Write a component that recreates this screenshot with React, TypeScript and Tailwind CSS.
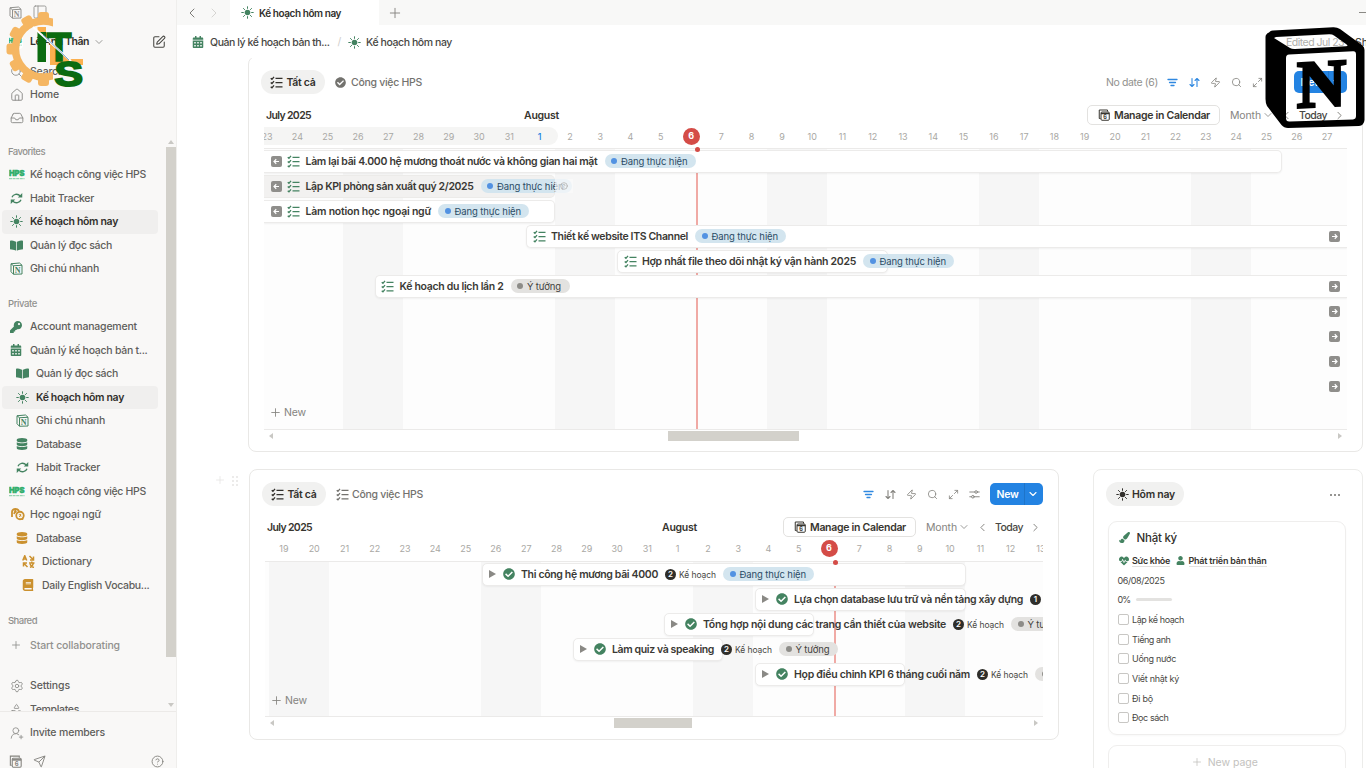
import { useLayoutEffect, useRef } from "react";
import type { ReactNode } from "react";
import {
  ChevronDown, ChevronLeft, ChevronRight, CircleHelp, House, Inbox, Maximize2,
  PanelLeft, Plus, Search, Send, Settings, SquarePen, UserRoundPlus, Zap, Shapes,
} from "lucide-react";
import { FaBook, FaBookOpen, FaCalendarAlt, FaCheckCircle, FaDatabase, FaHeartbeat, FaKey, FaPaintBrush, FaUser } from "react-icons/fa";

/** Single line of text whose tracking is adjusted so it spans `w` pixels. */
function T({ w, className = "", children }: { w: number; className?: string; children: string }) {
  const ref = useRef<HTMLSpanElement>(null);
  useLayoutEffect(() => {
    const el = ref.current!;
    el.style.letterSpacing = "0px";
    const r = document.createRange();
    r.selectNodeContents(el);
    const natural = r.getBoundingClientRect().width;
    el.style.letterSpacing = `${(w - natural) / children.length}px`;
  }, [w, children]);
  return (
    <span ref={ref} className={`block shrink-0 whitespace-nowrap pt-px ${className}`} style={{ width: w }}>
      {children}
    </span>
  );
}

const GREEN = "text-[#448361]";
const GOLD = "text-[#cb912f]";

function SunIcon({ className = "" }: { className?: string }) {
  return (
    <svg width="13" height="13" viewBox="0 0 26 26" className={`shrink-0 ${className}`} stroke="currentColor" strokeWidth="2" strokeLinecap="round">
      <circle cx="13" cy="13" r="5.6" fill="currentColor" stroke="none" />
      <path d="M13 1.5v3.3M13 21.2v3.3M1.5 13h3.3M21.2 13h3.3M4.9 4.9l2.3 2.3M18.8 18.8l2.3 2.3M4.9 21.1l2.3-2.3M18.8 7.2l2.3-2.3" />
    </svg>
  );
}

function Checklist({ className = "" }: { className?: string }) {
  return (
    <svg width="13" height="13" viewBox="0 0 26 26" className={`shrink-0 ${className}`} fill="none" stroke="currentColor" strokeWidth="2.700">
      <path d="M1.500 4.500l2.400 2.200L8 1.800M1.500 13l2.400 2.200L8 10.300M1.500 21.500l2.400 2.200L8 18.800M11 4.800h14M11 13.300h14M11 21.800h14" />
    </svg>
  );
}

function Cycle({ className = "" }: { className?: string }) {
  return (
    <svg width="13" height="13" viewBox="0 0 26 26" className={className} fill="none" stroke="currentColor" strokeWidth="2.6">
      <path d="M4 10.5C6 4.5 15 2 20.5 8M22 15.5C20 21.5 11 24 5.500 18" />
      <path d="M24.500 2v9h-9zM1.500 24v-9h9z" fill="currentColor" stroke="none" />
    </svg>
  );
}

function NotionMini({ className = "" }: { className?: string }) {
  return (
    <svg width="13" height="13" viewBox="0 0 26 26" className={className} fill="none" stroke="currentColor" strokeWidth="2">
      <path d="M2 3.500L19 2l5 4.500V24L7 24.500 2 19.500zM2 3.500L7 7.500 24 6.500M7 7.500v17" />
      <text x="15.500" y="21.500" textAnchor="middle" fontFamily="Liberation Serif, serif" fontWeight="700" fontSize="16" fill="currentColor" stroke="none">N</text>
    </svg>
  );
}

function HpsIcon() {
  return (
    <svg width="17" height="12" viewBox="0 0 17 12" className="-ml-px -mt-px text-[#2fae6b]">
      <text x="0" y="8" textLength="15.500" lengthAdjust="spacingAndGlyphs" fontFamily="Inter, sans-serif" fontWeight="900" fontSize="7.600" fill="currentColor" stroke="currentColor" strokeWidth="0.500">HPS</text>
      <path d="M0 10.700h15.500" stroke="currentColor" strokeWidth="1" strokeDasharray="3 .6" opacity=".6" />
    </svg>
  );
}

function ChatsIcon() {
  return (
    <svg width="15" height="13" viewBox="0 0 30 26" className="text-[#cb912f]" fill="none" stroke="currentColor" strokeWidth="3.600">
      <path d="M4 15V8c0-4 3-6 7-6s6 2 7 4M4 18v-5M8 12l2.500-6 2 3" />
      <circle cx="20" cy="15" r="7.500" />
      <path d="M26 18v5h-6M17.500 13.500h5M20 11.500l2 6M22 14l-4 4" strokeWidth="1.800" />
    </svg>
  );
}

function TranslateIcon() {
  return (
    <svg width="13" height="13" viewBox="0 0 26 26" className="text-[#cb912f]" fill="none" stroke="currentColor" strokeWidth="3">
      <path d="M1.500 11L5.500 1.500 9.500 11M3 8h5M15 2l7 7M23 3v7h-7M11 24l-7-7M3 23v-7h7M14 16h11M19.500 13v3M16 25c4-2 6-5 7-9M16 18c1 3 4 6 8 7" />
    </svg>
  );
}

function CalendarSix({ size = 12, className = "" }: { size?: number; className?: string }) {
  return (
    <svg width={size} height={size} viewBox="0 0 24 24" className={`shrink-0 ${className}`} fill="none" stroke="currentColor" strokeWidth="2">
      <path d="M5 19H2.500V2H19v3" />
      <rect x="6" y="6" width="16.500" height="16.500" rx="2" />
      <path d="M6 9h16.500" strokeWidth="3" />
      <text x="14.300" y="20.500" textAnchor="middle" fontFamily="Inter, sans-serif" fontWeight="700" fontSize="11" fill="currentColor" stroke="none">6</text>
    </svg>
  );
}

function FilterLines({ className = "" }: { className?: string }) {
  return (
    <svg width="11" height="11" viewBox="0 0 22 22" className={className} stroke="currentColor" strokeWidth="2.600" strokeLinecap="round">
      <path d="M2 5h18M5 11h12M8 17h6" />
    </svg>
  );
}

function SortArrows({ className = "" }: { className?: string }) {
  return (
    <svg width="11" height="11" viewBox="0 0 22 22" className={className} fill="none" stroke="currentColor" strokeWidth="2.200" strokeLinecap="round" strokeLinejoin="round">
      <path d="M6 3v16M2 15l4 4 4-4M16 19V3M12 7l4-4 4 4" />
    </svg>
  );
}

type NavItem = { icon: ReactNode; label: string; w: number; level?: number; active?: boolean; dim?: boolean };

function NavRow({ icon, label, w, level = 0, active, dim }: NavItem) {
  const pad = ["pl-[6px]", "pl-[12px]", "pl-[18px]"][level];
  return (
    <div className={`mx-[2px] flex h-[23.5px] w-[156px] shrink-0 items-center rounded-[4px] ${pad} ${active ? "bg-[#f0efee]" : ""}`}>
      <span className="flex w-[22px] shrink-0 items-center pl-[1.500px]">{icon}</span>
      <T w={w} className={active ? "font-semibold text-[#32302c]" : dim ? "font-medium text-[#91918e]" : "font-medium text-[#5f5e5b]"}>{label}</T>
    </div>
  );
}

const favorites: NavItem[] = [
  { icon: <HpsIcon />, label: "Kế hoạch công việc HPS", w: 116 },
  { icon: <Cycle className={GREEN} />, label: "Habit Tracker", w: 64 },
  { icon: <SunIcon className={GREEN} />, label: "Kế hoạch hôm nay", w: 88, active: true },
  { icon: <FaBookOpen size={13} className={GREEN} />, label: "Quản lý đọc sách", w: 82 },
  { icon: <NotionMini className={GREEN} />, label: "Ghi chú nhanh", w: 69 },
];

const privates: NavItem[] = [
  { icon: <FaKey size={12} className={GREEN} />, label: "Account management", w: 107 },
  { icon: <FaCalendarAlt size={12} className={GREEN} />, label: "Quản lý kế hoạch bản t...", w: 117.5 },
  { icon: <FaBookOpen size={13} className={GREEN} />, label: "Quản lý đọc sách", w: 82, level: 1 },
  { icon: <SunIcon className={GREEN} />, label: "Kế hoạch hôm nay", w: 88, level: 1, active: true },
  { icon: <NotionMini className={GREEN} />, label: "Ghi chú nhanh", w: 69, level: 1 },
  { icon: <FaDatabase size={12} className={GREEN} />, label: "Database", w: 45, level: 1 },
  { icon: <Cycle className={GREEN} />, label: "Habit Tracker", w: 64, level: 1 },
  { icon: <HpsIcon />, label: "Kế hoạch công việc HPS", w: 116 },
  { icon: <ChatsIcon />, label: "Học ngoại ngữ", w: 71 },
  { icon: <FaDatabase size={12} className={GOLD} />, label: "Database", w: 45, level: 1 },
  { icon: <TranslateIcon />, label: "Dictionary", w: 50, level: 2 },
  { icon: <FaBook size={12} className={GOLD} />, label: "Daily English Vocabu...", w: 107.5, level: 2 },
];

function SectionTitle({ children, w, className }: { children: string; w: number; className: string }) {
  return (
    <div className={`flex h-[23.5px] shrink-0 items-center pl-[8px] text-[9.500px] font-medium text-[#91918e] ${className}`}>
      <T w={w}>{children}</T>
    </div>
  );
}

function Sidebar() {
  const line = "text-[#91918e]";
  return (
    <aside className="flex h-full w-[177px] shrink-0 flex-col border-r border-[#efeeec] bg-[#f9f8f7]">
      <div className="flex h-6 shrink-0 items-center gap-[10px] pl-[9px] text-[#91918e]">
        <NotionMini />
        <PanelLeft size={16} strokeWidth={1.3} />
      </div>
      <div className="flex h-[35.25px] shrink-0 items-center pl-[9px]">
        <span className="flex h-[14px] w-[14px] items-center overflow-hidden rounded bg-white"><HpsIcon /></span>
        <T w={59} className="ml-[7px] font-semibold text-[#32302c]">Lê Anh Thân</T>
        <ChevronDown size={12} strokeWidth={1.800} className="ml-[4px] text-[#91918e]" />
        <SquarePen size={14} strokeWidth={1.8} className="ml-[47px] text-[#484743]" />
      </div>
      <NavRow icon={<Search size={13} strokeWidth={1.7} className={line} />} label="Search" w={34} />
      <NavRow icon={<House size={14} strokeWidth={1.7} className={line} />} label="Home" w={29} />
      <NavRow icon={<Inbox size={14} strokeWidth={1.7} className={line} />} label="Inbox" w={27} />
      <div className="mt-[8px] flex h-[573px] shrink-0">
        <div className="flex w-[166px] flex-col overflow-hidden">
          <SectionTitle w={37} className="mt-[1.75px]">Favorites</SectionTitle>
          {favorites.map((n) => <NavRow key={n.label} {...n} />)}
          <SectionTitle w={29} className="mt-[11px]">Private</SectionTitle>
          {privates.map((n, i) => <NavRow key={i} {...n} />)}
          <SectionTitle w={29} className="mt-[11.25px]">Shared</SectionTitle>
          <div className="mt-[1.5px]">
            <NavRow icon={<Plus size={12} strokeWidth={1.7} className={line} />} label="Start collaborating" w={90} dim />
          </div>
          <div className="mt-[17px]">
            <NavRow icon={<Settings size={14} strokeWidth={1.6} className={line} />} label="Settings" w={40} />
          </div>
          <NavRow icon={<Shapes size={13} strokeWidth={1.6} className={line} />} label="Templates" w={49} />
        </div>
        <div className="flex w-[10px] flex-col items-center">
          <span className="mt-[2px] h-0 w-0 border-x-[3px] border-b-[4px] border-x-transparent border-b-[#c9c8c4]" />
          <span className="mt-[3px] h-[510px] w-[10px] bg-[#d3d1cb]" />
          <span className="mt-[46px] h-0 w-0 border-x-[3px] border-t-[4px] border-x-transparent border-t-[#c9c8c4]" />
        </div>
      </div>
      <div className="flex h-[57px] shrink-0 flex-col border-t border-[#eceae8] pt-[9px]">
        <NavRow icon={<UserRoundPlus size={14} strokeWidth={1.5} className={line} />} label="Invite members" w={75} />
        <div className="mt-[11px] flex items-center pl-[9px] text-[#85847f]">
          <CalendarSix size={13} />
          <Send size={13} strokeWidth={1.7} className="ml-[11px]" />
          <CircleHelp size={13} strokeWidth={1.7} className="ml-[105px]" />
        </div>
      </div>
    </aside>
  );
}

function TopBars() {
  return (
    <>
      <div className="flex h-[25px] shrink-0 bg-[#f8f8f7]">
        <div className="flex w-[53px] items-center pl-[8px]">
          <ChevronLeft size={16} strokeWidth={1.500} className="-ml-px text-[#7d7c78]" />
          <ChevronRight size={16} strokeWidth={1.500} className="ml-[6px] text-[#d6d5d2]" />
        </div>
        <div className="flex w-[149px] items-center bg-white pl-[10.5px]">
          <SunIcon className={GREEN} />
          <T w={82} className="ml-[5.5px] text-[10px] font-semibold text-[#32302c]">Kế hoạch hôm nay</T>
        </div>
        <div className="flex flex-1 items-center pl-[8px]">
          <Plus size={16} strokeWidth={1.400} className="text-[#85847f]" />
          <span className="ml-auto h-px w-[7px] bg-[#8a8985]" />
        </div>
      </div>
      <div className="flex h-[33px] shrink-0 items-center overflow-hidden pl-[15px] pt-px font-medium text-[#484743]">
        <FaCalendarAlt size={12} className={GREEN} />
        <T w={119.5} className="ml-[6px]">Quản lý kế hoạch bản th...</T>
        <span className="ml-[8px] w-[10px] font-normal text-[#cfcecb]">/</span>
        <SunIcon className={GREEN} />
        <T w={86} className="ml-[5.500px]">Kế hoạch hôm nay</T>
        <T w={58} className="ml-auto font-normal text-[#b0afab]">Edited Jul 23</T>
        <span className="ml-[11px] w-[11px] whitespace-nowrap pt-px">Share</span>
      </div>
    </>
  );
}

type Entry = {
  left: number; width: number; title?: string; w?: number; back?: boolean; forward?: boolean;
  hover?: boolean; tag?: "doing" | "idea"; rel?: number; relName?: boolean; task?: boolean;
};

function Tag({ kind, faded }: { kind: "doing" | "idea"; faded?: boolean }) {
  const doing = kind === "doing";
  return (
    <span className={`relative ml-[7px] flex h-[14px] shrink-0 items-center rounded-full pl-[6.500px] ${doing ? "w-[91px] bg-[#d3e5ef]" : "w-[59px] bg-[#e3e2e0]"}`}>
      <span className={`h-[6px] w-[6px] shrink-0 rounded-full ${doing ? "bg-[#5292e2]" : "bg-[#8d8c88]"}`} />
      <T w={doing ? 66.5 : 34} className={`ml-[4px] text-[9.500px] ${doing ? "text-[#2b4c66]" : "text-[#42413d]"}`}>{doing ? "Đang thực hiện" : "Ý tưởng"}</T>
      {faded && (
        <span className="absolute inset-y-0 -right-px flex w-[18px] items-center justify-center bg-[#fafafa]/65 text-[#a9a8a4]">
          <CircleHelp size={8} strokeWidth={2} />
        </span>
      )}
    </span>
  );
}

function ArrowBox({ flip }: { flip?: boolean }) {
  return (
    <svg width="11" height="11" viewBox="0 0 22 22" className="shrink-0">
      <rect width="22" height="22" rx="4" fill="#8f8e8b" />
      <path d={flip ? "M16 11H6M10.500 6.500L6 11l4.500 4.500" : "M6 11h10M11.500 6.500L16 11l-4.500 4.500"} fill="none" stroke="#fff" strokeWidth="2.400" />
    </svg>
  );
}

function EntryRow({ e }: { e: Entry }) {
  return (
    <div className="relative flex h-[25px] shrink-0 items-center">
      {e.title && (
        <div
          className={`flex h-[23px] shrink-0 items-center border ${e.back ? "rounded-r-[5px] border-l-0 pl-[7px]" : e.task ? "rounded-[5px] pl-[6px]" : "rounded-[5px] pl-[5.500px]"} ${e.forward ? "rounded-r-none border-r-0" : ""} ${e.hover ? "border-[#ecebe9] bg-[#f2f1f0]" : "border-[#ecebea] bg-white shadow-[0_1px_2px_rgba(0,0,0,0.05)]"}`}
          style={{ marginLeft: e.left, width: e.width }}
        >
          {e.back && <span className="mr-[5px] shrink-0"><ArrowBox flip /></span>}
          {e.task ? (
            <>
              <span className="h-0 w-0 shrink-0 border-y-[4px] border-l-[7px] border-y-transparent border-l-[#8a8985]" />
              <FaCheckCircle size={12} className={`ml-[7.500px] mr-[0.500px] shrink-0 ${GREEN}`} />
            </>
          ) : (
            <Checklist className={GREEN} />
          )}
          <T w={e.w!} className="ml-[5.500px] font-semibold text-[#3a3935]">{e.title}</T>
          {e.rel && (
            <span className="ml-[7px] flex h-[11px] w-[11px] shrink-0 items-center justify-center rounded-full bg-[#2f2e2a] text-[8px] font-semibold text-white">{e.rel}</span>
          )}
          {e.relName && <T w={37} className="ml-[3px] text-[8.500px] text-[#484743]">Kế hoạch</T>}
          {e.tag && <Tag kind={e.tag} faded={e.hover} />}
        </div>
      )}
      {e.forward && <span className="absolute right-[7.500px] top-[7.500px]"><ArrowBox /></span>}
    </div>
  );
}

function Controls({ sortOn }: { sortOn?: boolean }) {
  const slot = "flex w-[21.2px] justify-center";
  return (
    <div className="flex items-center text-[#85847f]">
      <span className={slot}><FilterLines className="text-[#2f88e0]" /></span>
      <span className={slot}><SortArrows className={sortOn ? "text-[#2f88e0]" : ""} /></span>
      <span className={slot}><Zap size={11} strokeWidth={1.800} /></span>
      <span className={slot}><Search size={11} strokeWidth={1.800} /></span>
      <span className={slot}><Maximize2 size={11} strokeWidth={1.800} /></span>
      <span className={slot}>
        <svg width="11" height="11" viewBox="0 0 22 22" fill="none" stroke="currentColor" strokeWidth="1.900" strokeLinecap="round">
          <path d="M1.500 6h10M17 6h3.500M1.500 15.500H5M10.500 15.500h10" />
          <circle cx="14.200" cy="6" r="2.600" />
          <circle cx="7.800" cy="15.500" r="2.600" />
        </svg>
      </span>
      <span className="ml-[4.500px] flex h-[21.500px] w-[53px] items-center rounded-[5px] bg-[#2383e2] text-white">
        <T w={22} className="ml-[6.500px] font-semibold">New</T>
        <span className="ml-[5px] flex h-full w-[18px] items-center justify-center border-l border-[#1e74c9]"><ChevronDown size={12} strokeWidth={2.200} /></span>
      </span>
    </div>
  );
}

type TimelineProps = {
  secondIcon: ReactNode; noDate?: boolean; monthGap: string; firstDay: number; count: number; shift: number;
  todayX: number; dark?: boolean; rows: Entry[]; chartClass: string; thumbClass: string;
};

function Timeline(p: TimelineProps) {
  const days = Array.from({ length: p.count }, (_, i) => p.firstDay + i);
  // 26 July 2025 is a Saturday
  const weekend = (d: number) => (((d - 26) % 7) + 7) % 7 < 2;
  return (
    <div className="flex flex-col">
      <div className="flex h-6 items-center">
        <div className="-ml-[3px] flex h-6 w-[64px] items-center rounded-full bg-[#f1f1f0] pl-[9px] text-[#32302c]">
          <Checklist />
          <T w={29} className="ml-[3.500px] font-semibold">Tất cả</T>
        </div>
        <span className="ml-[9.500px] text-[#73726e]">{p.secondIcon}</span>
        <T w={71} className={`${p.noDate ? "ml-[5.500px]" : "ml-[3.500px]"} font-medium text-[#73726e]`}>Công việc HPS</T>
        <div className="ml-auto flex items-center">
          {p.noDate && <T w={52} className="mr-[4.500px] text-[#91918e]">No date (6)</T>}
          <Controls sortOn={p.noDate} />
        </div>
      </div>
      <div className="mt-[11px] flex h-5 items-center text-[#37352f]">
        <T w={45} className="ml-[2px] font-semibold">July 2025</T>
        <T w={35} className={`font-semibold ${p.monthGap}`}>August</T>
        <div className="ml-auto flex h-5 w-[133px] items-center rounded-[5px] border border-[#e3e2e0] bg-white pl-[9.500px]">
          <CalendarSix />
          <T w={96} className="ml-[4.500px] font-semibold">Manage in Calendar</T>
        </div>
        <T w={31} className="ml-[10px] text-[#85847f]">Month</T>
        <ChevronDown size={12} strokeWidth={1.800} className="ml-[1px] text-[#91918e]" />
        <ChevronLeft size={13} strokeWidth={1.800} className="ml-[6px] text-[#85847f]" />
        <T w={28} className="ml-[6px] font-medium text-[#484743]">Today</T>
        <ChevronRight size={13} strokeWidth={1.800} className="ml-[6px] mr-px text-[#85847f]" />
      </div>
      <div className="mt-[2px] flex h-[18px] overflow-hidden">
        <div className={`flex w-[294px] shrink-0 ${p.dark ? "rounded-r-full bg-[#f5f5f4]" : ""}`}>
          {days.map((d, i) => {
            const n = d > 31 ? d - 31 : d;
            const today = d === 37;
            return (
              <span key={d} className="flex w-[30.290px] shrink-0 items-center justify-center pt-px text-[9px] text-[#a9a8a4]" style={{ marginLeft: i === 0 ? p.shift : 0 }}>
                <span className={today ? "-mt-px flex h-[17px] w-[17px] items-center justify-center rounded-full bg-[#d44c47] font-bold text-white" : p.dark && d === 32 ? "font-medium text-[#2383e2]" : ""}>{n}</span>
              </span>
            );
          })}
        </div>
      </div>
      <div className={`relative shadow-[inset_0_1px_0_#ebeae9,inset_0_-1px_0_#ebeae9] ${p.chartClass}`}>
        <div className="absolute inset-x-0 bottom-px top-px flex overflow-hidden bg-[#fdfdfd]">
          {days.map((d, i) => (
            <span key={d} className={`w-[30.290px] shrink-0 ${weekend(d) ? "bg-[#f6f6f6]" : ""}`} style={{ marginLeft: i === 0 ? p.shift : 0 }} />
          ))}
          <span className="absolute inset-y-0 w-[2px] bg-[#f0aaa5]" style={{ left: p.todayX }} />
        </div>
        <div className="relative flex h-full flex-col overflow-hidden pt-[0.500px]">
          {p.rows.map((e, i) => <EntryRow key={i} e={e} />)}
          <div className="mt-auto flex h-[31px] shrink-0 items-center pb-[4px] pl-[5px] text-[#85847f]">
            <Plus size={13} strokeWidth={1.600} />
            <T w={22} className="ml-[2px]">New</T>
          </div>
        </div>
        <span className="absolute -top-[1px] h-[5px] w-[5px] rounded-full bg-[#d44c47]" style={{ left: p.todayX - 1.5 }} />
      </div>
      <div className="flex h-[12px] items-center px-[5px]">
        <span className="h-0 w-0 border-y-[3px] border-r-[4px] border-y-transparent border-r-[#c9c8c4]" />
        <span className={`h-[9.500px] bg-[#d3d1cb] ${p.thumbClass}`} />
        <span className="ml-auto h-0 w-0 border-y-[3px] border-l-[4px] border-y-transparent border-l-[#c9c8c4]" />
      </div>
    </div>
  );
}

const mainRows: Entry[] = [
  { left: 0, width: 1018, back: true, title: "Làm lại bãi 4.000 hệ mương thoát nước và không gian hai mặt", w: 292, tag: "doing" },
  { left: 0, width: 291, back: true, hover: true, title: "Lập KPI phòng sản xuất quý 2/2025", w: 168, tag: "doing" },
  { left: 0, width: 290.5, back: true, title: "Làm notion học ngoại ngữ", w: 125.5, tag: "doing" },
  { left: 262, width: 821, forward: true, title: "Thiết kế website ITS Channel", w: 137, tag: "doing" },
  { left: 353, width: 271, title: "Hợp nhất file theo dõi nhật ký vận hành 2025", w: 214, tag: "doing" },
  { left: 110.5, width: 972.5, forward: true, title: "Kế hoạch du lịch lần 2", w: 104, tag: "idea" },
  { left: 0, width: 0, forward: true },
  { left: 0, width: 0, forward: true },
  { left: 0, width: 0, forward: true },
  { left: 0, width: 0, forward: true },
];

const taskRows: Entry[] = [
  { left: 216.5, width: 484, task: true, title: "Thi công hệ mương bãi 4000", w: 137, rel: 2, relName: true, tag: "doing" },
  { left: 489.5, width: 211, task: true, title: "Lựa chọn database lưu trữ và nền tảng xây dựng", w: 229, rel: 1 },
  { left: 398.5, width: 150.5, task: true, title: "Tổng hợp nội dung các trang cần thiết của website", w: 243, rel: 2, relName: true, tag: "idea" },
  { left: 307.5, width: 150.5, task: true, title: "Làm quiz và speaking", w: 102, rel: 2, relName: true, tag: "idea" },
  { left: 489.5, width: 150, task: true, title: "Họp điều chỉnh KPI 6 tháng cuối năm", w: 176, rel: 2, relName: true, tag: "idea" },
];

const checks: [string, number][] = [["Lập kế hoạch", 52], ["Tiếng anh", 38.5], ["Uống nước", 44], ["Viết nhật ký", 47], ["Đi bộ", 21], ["Đọc sách", 36.5]];

function TodayPanel() {
  return (
    <section className="ml-[34px] flex h-[320px] w-[270px] flex-col rounded-[8px] border-[1.500px] border-[#ececea] px-[15px] pt-[12px]">
      <div className="-ml-[3px] flex h-6 items-center justify-between pr-[7px]">
        <div className="flex h-6 w-[78px] items-center rounded-full bg-[#f1f1f0] pl-[9.500px] text-[#32302c]">
          <SunIcon />
          <T w={43} className="ml-[3.500px] font-semibold">Hôm nay</T>
        </div>
        <div className="mt-px flex gap-[2px]">
          {[0, 1, 2].map((i) => <span key={i} className="h-[2px] w-[2px] rounded-full bg-[#73726e]" />)}
        </div>
      </div>
      <div className="-ml-px mt-[15px] flex h-[214px] w-[238px] flex-col rounded-[9px] border border-[#efeeed] pl-[8.500px] pt-[5.500px] text-[9px] text-[#484743] shadow-[0_1px_2px_rgba(0,0,0,0.03)]">
        <div className="flex h-[20px] items-center">
          <FaPaintBrush size={11} className={`ml-px ${GREEN}`} />
          <T w={40.5} className="ml-[7px] text-[11.500px] font-medium text-[#32302c]">Nhật ký</T>
        </div>
        <div className="mt-[3px] flex h-[20px] items-center font-semibold text-[#37352f]">
          <FaHeartbeat size={10} className={`ml-px ${GREEN}`} />
          <T w={38} className="ml-[3.500px] border-b border-[#e3e2e0] leading-[11px]">Sức khỏe</T>
          <FaUser size={9} className={`ml-[5.500px] ${GREEN}`} />
          <T w={78} className="ml-[4px] border-b border-[#e3e2e0] leading-[11px]">Phát triển bản thân</T>
        </div>
        <div className="flex h-[19.600px] items-center"><T w={47}>06/08/2025</T></div>
        <div className="flex h-[19.600px] items-center">
          <T w={12.5}>0%</T>
          <span className="ml-[6px] h-[3px] w-[36px] rounded-full bg-[#e3e2e0]" />
        </div>
        {checks.map(([label, w]) => (
          <div key={label} className="flex h-[19.640px] shrink-0 items-center">
            <span className="h-[11px] w-[11px] rounded-[2px] border border-[#c8c7c4] bg-white" />
            <T w={w} className="ml-[3.500px]">{label}</T>
          </div>
        ))}
      </div>
      <div className="-ml-px mt-[10px] flex h-[40px] w-[238px] items-start justify-center rounded-[9px] border border-[#efeeed] pr-[5px] pt-[9px] text-[#c3c2be]">
        <Plus size={12} strokeWidth={1.600} className="mt-px" />
        <T w={50} className="ml-[4.500px]">New page</T>
      </div>
    </section>
  );
}

function GearLogo() {
  const teeth = [90, 120, 150, 180, 210, 240, 270];
  return (
    <svg width="84" height="84" viewBox="0 0 84 84" className="absolute left-[3px] top-[7px]">
      <defs><clipPath id="gear-half"><rect x="0" y="0" width="50" height="84" /></clipPath></defs>
      <g clipPath="url(#gear-half)">
        <circle cx="40.500" cy="42" r="28" fill="none" stroke="#f5b662" strokeWidth="7.500" />
        {teeth.map((a) => (
          <rect key={a} x="68" y="36.500" width="9.500" height="11" rx="3" fill="#f5b662" transform={`rotate(${a} 40.500 42)`} />
        ))}
      </g>
      <path d="M34.500 20h8.500v14l-8.500-8z" fill="#fbb04f" />
      <path d="M48 36l19 16h13v6H47V36z" fill="#fbb04f" />
      <rect x="34.500" y="25" width="8.500" height="30" fill="#0b6b10" />
      <text x="43.500" y="53.500" fontFamily="Liberation Sans, sans-serif" fontWeight="700" fontSize="41" textLength="25" lengthAdjust="spacingAndGlyphs" fill="#0b6b10" stroke="#0b6b10" strokeWidth="1.500">T</text>
      <path d="M30 20L68 54" stroke="#fff" strokeWidth="2" />
      <path d="M40 28L66 53" stroke="#7ba7d6" strokeWidth="1" />
      <text x="51.500" y="78.500" fontFamily="Liberation Sans, sans-serif" fontWeight="700" fontSize="35" textLength="28.500" lengthAdjust="spacingAndGlyphs" fill="#0b6b10" stroke="#0b6b10" strokeWidth="2">S</text>
    </svg>
  );
}

function CubeLogo() {
  return (
    <svg width="101" height="104" viewBox="-2 0 101 104" className="absolute right-0 top-[26px]">
      <path
        fillRule="evenodd"
        d="M3 6.500Q4.500 4.500 7 4.500L67 1.200Q71 1 74 3L96.500 19.500Q98.500 21 98.500 24V94Q98 99.500 93 100L22 102Q18 102 15.500 99L1 80Q-0.500 77 -0.500 73V11Q-0.500 8 3 6.500zM8 12L24 22Q26 23.200 29 23L80 20.200Q83 20 80 18L68 9.500Q66 8 63 8.200L10 11zM23 28.500Q20 28.500 20 32V92Q20 96 24 95.500L87 93.500Q90 93 90 90V28.500Q90 25 87 25.300z"
        transform="translate(-1 0)"
      />
      <text x="30" y="81" fontFamily="Liberation Serif, serif" fontWeight="700" fontSize="67" textLength="49" lengthAdjust="spacingAndGlyphs" stroke="#000" strokeWidth="3" transform="skewY(-3) translate(0 2)">N</text>
    </svg>
  );
}

export default function App() {
  return (
    <div className="relative flex h-[768px] w-[1366px] overflow-hidden bg-white text-[10.500px] leading-[14px] text-[#37352f]" style={{ fontFamily: "Inter, 'Noto Sans', sans-serif" }}>
      <Sidebar />
      <main className="flex min-w-0 flex-1 flex-col">
        <TopBars />
        <div className="flex min-h-0 flex-1 flex-col overflow-hidden">
          <section className="-mt-[2px] ml-[71px] h-[396px] w-[1115px] shrink-0 rounded-[8px] border-[1.500px] border-[#e9e8e6] px-[15px] pt-[13px]">
            <Timeline
              secondIcon={<FaCheckCircle size={11} />} noDate monthGap="ml-[213px]" firstDay={23} count={37} shift={-12}
              todayX={432} dark rows={mainRows} chartClass="mt-[3px] h-[282px]" thumbClass="ml-[395px] w-[131px]"
            />
          </section>
          <div className="mt-[17px] flex">
            <div className="flex w-[72px] items-start pl-[37px] pt-[5px] text-[#e4e3e1]">
              <Plus size={12} strokeWidth={1.500} />
              <span className="ml-[6px] mt-[2px] grid grid-cols-2 gap-[2px]">
                {[0, 1, 2, 3, 4, 5].map((i) => <span key={i} className="h-[2px] w-[2px] bg-[#ecebea]" />)}
              </span>
            </div>
            <section className="h-[271px] w-[810px] rounded-[8px] border-[1.500px] border-[#e9e8e6] px-[15px] pt-[12px]">
              <Timeline
                secondIcon={<Checklist />} monthGap="ml-[350px]" firstDay={19} count={26} shift={3.8}
                todayX={569} rows={taskRows} chartClass="mt-[4px] h-[156px]" thumbClass="ml-[340px] w-[78px]"
              />
            </section>
            <TodayPanel />
          </div>
        </div>
      </main>
      <GearLogo />
      <CubeLogo />
    </div>
  );
}
